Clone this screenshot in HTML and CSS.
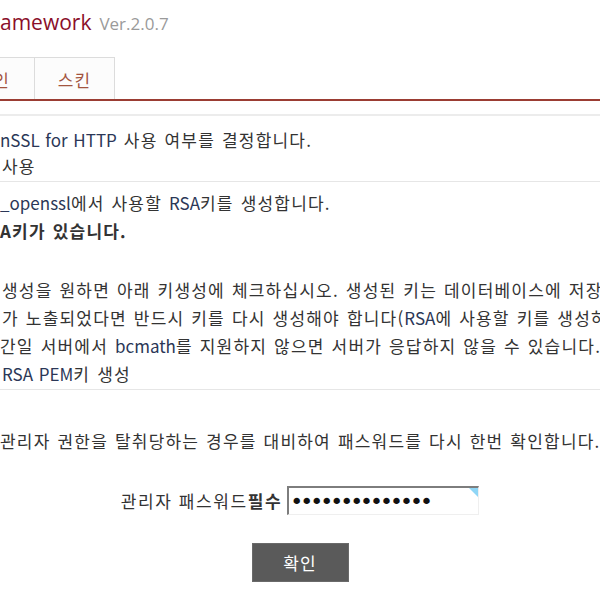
FILE: index.html
```html
<!DOCTYPE html>
<html lang="ko">
<head>
<meta charset="utf-8">
<title>Framework</title>
<link rel="stylesheet" href="styles.css">
</head>
<body>
<header class="top">
  <h1 class="title">amework</h1>
  <span class="ver">Ver.2.0.7</span>
</header>
<nav class="tabs">
  <a class="tab tab-first">인</a>
  <a class="tab">스킨</a>
</nav>
<main class="section">
  <div class="row row-ssl">
    <p class="line"><span class="en">nSSL for HTTP</span> 사용 여부를 결정합니다.</p>
    <p class="line indent">사용</p>
  </div>
  <div class="row row-rsa">
    <p class="line"><span class="en">_openssl</span>에서 사용할 <span class="en">RSA</span>키를 생성합니다.</p>
    <p class="line strong">A키가 있습니다.</p>
    <div class="desc">
      <p class="line indent">생성을 원하면 아래 키생성에 체크하십시오. 생성된 키는 데이터베이스에 저장</p>
      <p class="line indent">가 노출되었다면 반드시 키를 다시 생성해야 합니다(<span class="en">RSA</span>에 사용할 키를 생성하</p>
      <p class="line">간일 서버에서 <span class="en">bcmath</span>를 지원하지 않으면 서버가 응답하지 않을 수 있습니다.</p>
      <p class="line indent"><span class="en">RSA PEM</span>키 생성</p>
    </div>
  </div>
  <div class="confirm">
    <p class="line">관리자 권한을 탈취당하는 경우를 대비하여 패스워드를 다시 한번 확인합니다.</p>
    <div class="pw-row">
      <label class="pw-label" for="pw">관리자 패스워드<b>필수</b></label>
      <span class="pw-box"><input id="pw" class="pw-input" type="password" value="12345678901234"></span>
    </div>
    <div class="btn-row">
      <button class="btn" type="button">확인</button>
    </div>
  </div>
</main>
</body>
</html>
```

FILE: styles.css
```css
html, body {
  margin: 0;
  padding: 0;
  background: #ffffff;
  overflow: hidden;
}
body {
  width: 600px;
  height: 600px;
  font-family: "Noto Sans CJK KR", "Noto Sans", sans-serif;
  font-size: 17px;
  letter-spacing: 1.2px;
  color: #333333;
}
.top {
  height: 57px;
  box-sizing: border-box;
  padding-top: 11px;
  display: flex;
  align-items: baseline;
  gap: 8px;
  font-family: "Open Sans", "Noto Sans", sans-serif;
  letter-spacing: 0;
}
.title {
  margin: 0;
  font-size: 21px;
  line-height: 22px;
  font-weight: 400;
  color: #8a0f2a;
}
.ver {
  font-size: 17px;
  line-height: 22px;
  color: #9a9a9a;
}
.tabs {
  display: flex;
  border-bottom: 2px solid #9b3d33;
}
.tab {
  height: 42px;
  box-sizing: border-box;
  border-top: 1px solid #dcdcdc;
  border-right: 1px solid #dcdcdc;
  background: #fcfcfc;
  display: flex;
  align-items: center;
  justify-content: center;
  width: 80px;
  color: #a3543f;
  font-size: 17px;
  padding-top: 2px;
}
.tab-first {
  width: 35px;
  justify-content: flex-end;
  padding-right: 24px;
  white-space: nowrap;
}
.section {
  margin-top: 13px;
  border-top: 2px solid #ececec;
}
.line {
  margin: 0;
  white-space: nowrap;
  line-height: 28px;
  word-spacing: 1px;
}
.indent {
  padding-left: 2px;
}
.en {
  color: #2b3757;
  letter-spacing: 0;
}
.row {
  border-bottom: 1px solid #e6e6e6;
}
.row-ssl {
  padding-top: 11px;
  padding-bottom: 2px;
}
.row-ssl .line {
  line-height: 26px;
}
.row-rsa {
  padding-top: 7px;
  padding-bottom: 1px;
}
.strong {
  font-weight: 700;
  font-size: 17px;
}
.desc {
  margin-top: 31px;
}
.confirm {
  padding-top: 37px;
}
.pw-row {
  margin-top: 31px;
  display: flex;
  align-items: center;
  justify-content: center;
  gap: 5px;
  padding-left: 0;
}
.pw-label {
  letter-spacing: 1.6px;
}
.pw-label b {
  font-weight: 700;
}
.pw-box {
  position: relative;
  display: block;
}
.pw-box::after {
  content: "";
  position: absolute;
  top: 2px;
  right: 1px;
  width: 0;
  height: 0;
  border-top: 9px solid #8fd6f6;
  border-left: 9px solid transparent;
}
.pw-input {
  display: block;
  width: 192px;
  height: 29px;
  box-sizing: border-box;
  margin: 0;
  padding: 0 4px 0 1px;
  border-top: 2px solid #7d7d7d;
  border-left: 2px solid #7d7d7d;
  border-right: 1px solid #efefef;
  border-bottom: 1px solid #efefef;
  font-family: "DejaVu Sans", sans-serif;
  font-size: 22px;
  letter-spacing: -3px;
  color: #111111;
  background: #ffffff;
  outline: none;
}
.btn-row {
  margin-top: 28px;
  display: flex;
  justify-content: center;
}
.btn {
  width: 97px;
  height: 39px;
  border: 1px solid #6a6a6a;
  background: #5a5a5a;
  color: #ffffff;
  font-family: "Noto Sans CJK KR", sans-serif;
  font-size: 17px;
  letter-spacing: 1px;
  padding: 0;
}
```
